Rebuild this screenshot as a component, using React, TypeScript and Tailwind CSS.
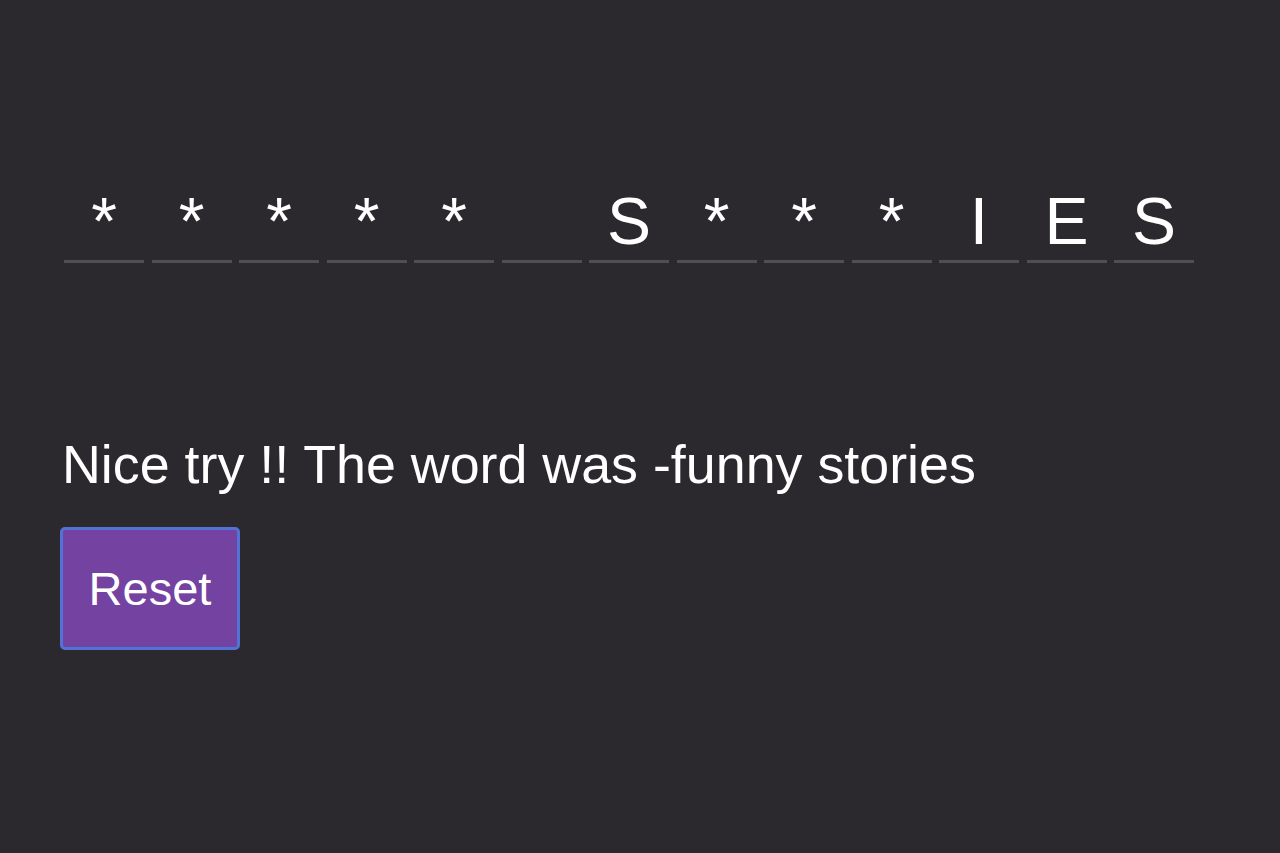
import React from "react";

const slots = ["*", "*", "*", "*", "*", "", "S", "*", "*", "*", "I", "E", "S"];

export default function App() {
  return (
    <div
      className="min-h-[853px] w-full bg-[#2b292e] text-white"
      style={{ fontFamily: '"Liberation Sans", Arial, sans-serif' }}
    >
      <div className="pl-[64px] pt-[188px]">
        <div className="flex gap-[7.5px]">
          {slots.map((c, i) => (
            <div
              key={i}
              className="flex h-[75px] w-[80px] items-start justify-center border-b-[3px] border-[#4f4e54]"
            >
              <span className="text-[66px] leading-none">
                {c === "" ? "\u00a0" : c}
              </span>
            </div>
          ))}
        </div>
      </div>
      <div className="pl-[62px] pt-[175px]">
        <p className="text-[53.8px] leading-none">Nice try !! The word was -funny stories</p>
      </div>
      <div className="pl-[60px] pt-[35px]">
        <button className="flex h-[123px] w-[180px] items-center justify-center rounded-[5px] border-[3px] border-[#5272d6] bg-[#7442a1] text-[47px] leading-none text-white">
          Reset
        </button>
      </div>
    </div>
  );
}
